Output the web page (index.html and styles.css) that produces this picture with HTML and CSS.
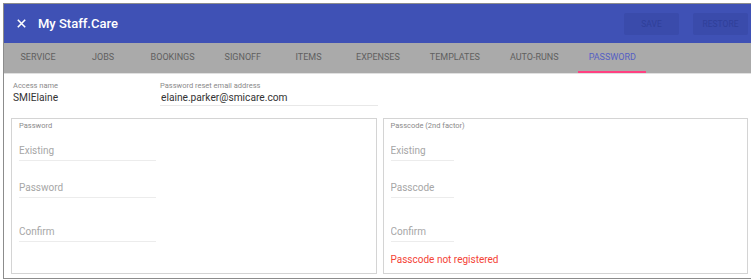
FILE: index.html
```html
<!DOCTYPE html>
<html lang="en">
<head>
    <meta charset="UTF-8">
    <title>My Staff.Care</title>
    <link rel="stylesheet" href="styles.css">
</head>
<body>
<div class="app">
    <header class="toolbar">
        <button class="close" title="Close">
            <svg width="9" height="9" viewBox="0 0 9 9"><path d="M0.8 0.8L8.2 8.2M8.2 0.8L0.8 8.2" stroke="#fff" stroke-width="1.6" fill="none"/></svg>
        </button>
        <span class="title">My Staff.Care</span>
        <span class="spacer"></span>
        <button class="action" disabled>SAVE</button>
        <button class="action" disabled>RESTORE</button>
    </header>

    <nav class="tabs">
        <a class="tab">SERVICE</a>
        <a class="tab">JOBS</a>
        <a class="tab">BOOKINGS</a>
        <a class="tab">SIGNOFF</a>
        <a class="tab">ITEMS</a>
        <a class="tab">EXPENSES</a>
        <a class="tab">TEMPLATES</a>
        <a class="tab">AUTO-RUNS</a>
        <a class="tab active">PASSWORD</a>
    </nav>

    <main class="content">
        <div class="account">
            <div class="access">
                <div class="small-label">Access name</div>
                <div class="access-value">SMIElaine</div>
            </div>
            <div class="email">
                <label class="small-label" for="resetEmail">Password reset email address</label>
                <input class="email-input" id="resetEmail" type="text" value="elaine.parker@smicare.com">
            </div>
        </div>

        <div class="panels">
            <div class="panel">
                <div class="small-label">Password</div>
                <input class="line-input wide first" type="password" placeholder="Existing">
                <input class="line-input wide second" type="password" placeholder="Password">
                <input class="line-input wide third" type="password" placeholder="Confirm">
            </div>
            <div class="panel">
                <div class="small-label">Passcode (2nd factor)</div>
                <input class="line-input narrow first" type="password" placeholder="Existing">
                <input class="line-input narrow second" type="password" placeholder="Passcode">
                <input class="line-input narrow third" type="password" placeholder="Confirm">
                <div class="error">Passcode not registered</div>
            </div>
        </div>
    </main>
</div>
</body>
</html>
```

FILE: styles.css
```css
body {
    margin: 3px;
    font-family: Roboto, "Liberation Sans", Arial, sans-serif;
    background-color: #fff;
    color: #333;
}

.app {
    width: 747px;
    height: 274px;
    border: 1px solid #8c8c8c;
    box-shadow: 1px 1px 1px #c8c8c8;
    display: flex;
    flex-direction: column;
    overflow: hidden;
}

.toolbar {
    height: 39px;
    background-color: #3f51b5;
    display: flex;
    align-items: center;
    padding: 0 3px 0 13px;
    color: #fff;
}
.close {
    background: none;
    border: none;
    padding: 0;
    width: 9px;
    height: 9px;
    display: flex;
    margin-right: 12px;
}
.title {
    font-size: 13px;
    font-weight: 500;
}
.spacer { flex: 1; }
.action {
    width: 55px;
    height: 22px;
    margin-left: 14px;
    border: none;
    border-radius: 2px;
    background-color: #3a4bab;
    color: #2f3f99;
    font-family: inherit;
    font-size: 8.5px;
    padding: 0;
}

.tabs {
    height: 30px;
    background-color: #aaaaaa;
    display: flex;
    padding-left: 6px;
    gap: 9px;
    border-bottom: 1px solid #e0e0e0;
}
.tab {
    min-width: 56px;
    padding: 0 10.5px;
    display: flex;
    align-items: center;
    justify-content: center;
    font-size: 9px;
    color: #606060;
    box-sizing: border-box;
    border-bottom: 2px solid transparent;
}
.tab.active {
    color: #5560c4;
    border-bottom-color: #ff4081;
}

.content {
    flex: 1;
    padding: 4px 3px 4px 7px;
    display: flex;
    flex-direction: column;
}

.account {
    display: flex;
    align-items: flex-end;
    height: 28px;
}
.small-label {
    display: block;
    font-size: 7.5px;
    line-height: 10px;
    color: #8a8a8a;
}
.access {
    width: 147px;
    padding-left: 2px;
    padding-bottom: 2px;
}
.access-value {
    font-size: 10.2px;
    line-height: 13px;
    color: #333;
}
.email {
    width: 218px;
}
.email-input {
    display: block;
    width: 100%;
    box-sizing: border-box;
    border: none;
    border-bottom: 1px solid #e8e8e8;
    padding: 1px 1px 2px;
    font-family: inherit;
    font-size: 10.2px;
    color: #333;
    outline: none;
}

.panels {
    flex: 1;
    margin-top: 12px;
    display: grid;
    grid-template-columns: 1fr 1fr;
    gap: 6px;
}
.panel {
    border: 1.5px solid #d4d4d4;
    padding: 2px 7px;
    display: flex;
    flex-direction: column;
    align-items: flex-start;
}
.line-input {
    border: none;
    border-bottom: 1px solid #ececec;
    padding: 0 0 2px;
    height: 18px;
    box-sizing: border-box;
    font-family: inherit;
    font-size: 10px;
    color: #333;
    outline: none;
    background: none;
}
.line-input::placeholder { color: #a6a6a6; }
.line-input.wide { width: 137px; }
.line-input.narrow { width: 63px; }
.line-input.first { margin-top: 12px; }
.line-input.second { margin-top: 19px; }
.line-input.third { margin-top: 26px; }
.error {
    margin-top: 12px;
    font-size: 10px;
    color: #f44336;
}
```
